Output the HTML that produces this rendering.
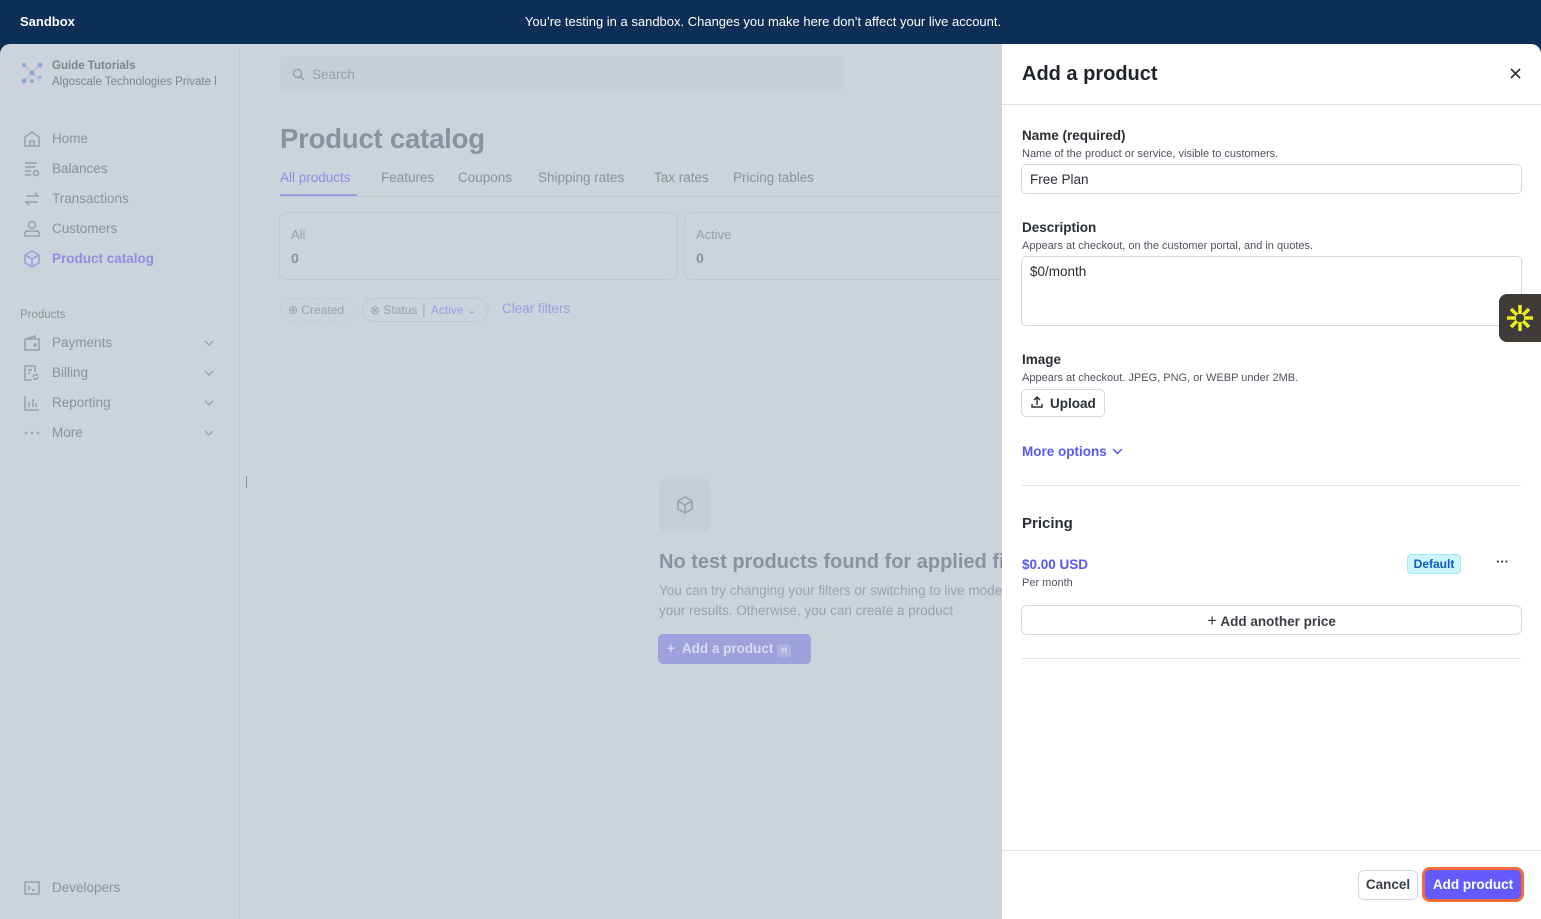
<!DOCTYPE html>
<html><head><style>
*{box-sizing:border-box;margin:0;padding:0}
body{width:1541px;height:919px;overflow:hidden;background:#0d2f57;font-family:"Liberation Sans",sans-serif;position:relative}
.top{position:absolute;left:0;top:0;width:1541px;height:44px;color:#fff;font-size:13px}
.top .l{position:absolute;left:20px;top:14px;font-weight:bold}
.top .c{position:absolute;left:0;width:1526px;top:14px;text-align:center}
.app{position:absolute;left:0;top:44px;width:1541px;height:875px;background:#ccd3dd;border-radius:10px 10px 0 0;overflow:hidden}
.side{position:absolute;left:0;top:0;width:240px;height:875px;border-right:1px solid #c4cbd5}
.nav{position:absolute;left:52px;font-size:13.5px;color:#8a929d}
.si{position:absolute;left:23px}
.chev{position:absolute;left:204px}
.tab{position:absolute;top:126px;font-size:13.5px;color:#8a929d}
.panel{position:absolute;left:1002px;top:0;width:539px;height:875px;background:#fff;border-radius:0 10px 0 0}
.lbl{position:absolute;left:20px;font-size:13.5px;font-weight:bold;color:#2a2f36}
.sub{position:absolute;left:20px;font-size:11px;color:#4d5560}
.inp{position:absolute;left:19px;width:501px;border:1px solid #d5d9de;border-radius:5px;font-size:13.5px;color:#2a2f36;padding:7px 8px}
.hr{position:absolute;left:20px;width:499px;height:1px;background:#e1e4e8}
</style></head><body>
<div class="top"><span class="l">Sandbox</span><div class="c">You’re testing in a sandbox. Changes you make here don’t affect your live account.</div></div>
<div class="app">
<div class="side">
<svg style="position:absolute;left:21px;top:18px" width="22" height="22"><path d="M3 3L19 19M19 3L3 19" stroke="#a9b8dc" stroke-width="1"/><circle cx="3" cy="3" r="2" fill="#8fa6d6"/><circle cx="19" cy="3" r="2.5" fill="#8fa6d6"/><circle cx="11" cy="11" r="2.5" fill="#8fa6d6"/><circle cx="3" cy="19" r="2.5" fill="#8fa6d6"/><circle cx="11" cy="19" r="2" fill="#8fa6d6"/><circle cx="19" cy="15" r="1.5" fill="#8fa6d6"/></svg>
<div style="position:absolute;left:52px;top:16px;font-size:11.5px;color:#7c848f;font-weight:bold">Guide Tutorials</div>
<div style="position:absolute;left:52px;top:32px;font-size:11.5px;color:#7c848f;white-space:nowrap;width:170px;overflow:hidden">Algoscale Technologies Private l</div>
<svg class="si" style="top:86px" width="18" height="18" fill="none" stroke="#97a0ab" stroke-width="1.5"><path d="M2 7L9 2L16 7V16H2Z M7 16V11H11V16"/></svg><div class="nav" style="top:87px">Home</div>
<svg class="si" style="top:116px" width="18" height="18" fill="none" stroke="#97a0ab" stroke-width="1.5"><path d="M2 3H14M2 7H12M2 11H8M2 15H8"/><circle cx="13" cy="13" r="2.5"/></svg><div class="nav" style="top:117px">Balances</div>
<svg class="si" style="top:146px" width="18" height="18" fill="none" stroke="#97a0ab" stroke-width="1.5"><path d="M3 6H15L12 3M15 12H3L6 15"/></svg><div class="nav" style="top:147px">Transactions</div>
<svg class="si" style="top:176px" width="18" height="18" fill="none" stroke="#97a0ab" stroke-width="1.5"><circle cx="9" cy="5" r="3.5"/><path d="M2 16V13Q2 11 5 11H13Q16 11 16 13V16Z"/></svg><div class="nav" style="top:177px">Customers</div>
<svg class="si" style="top:206px" width="18" height="18" fill="none" stroke="#9a9ee0" stroke-width="1.5"><path d="M9 1L16 5V13L9 17L2 13V5Z M2 5L9 9L16 5 M9 9V17"/></svg><div class="nav" style="top:207px;color:#8f8fe0;font-weight:bold">Product catalog</div>
<div style="position:absolute;left:20px;top:265px;font-size:11.5px;color:#8a929d">Products</div>
<svg class="si" style="top:290px" width="18" height="18" fill="none" stroke="#97a0ab" stroke-width="1.5"><path d="M2 5H16V16H2Z M3 5L12 2V5"/><circle cx="12" cy="11" r="1" fill="#97a0ab"/></svg><div class="nav" style="top:291px">Payments</div>
<svg class="si" style="top:320px" width="18" height="18" fill="none" stroke="#97a0ab" stroke-width="1.5"><path d="M9 16H2V2H12V8 M5 6H9M5 9H7 M10 13Q11 10 15 11M15 13Q14 16 10 15"/></svg><div class="nav" style="top:321px">Billing</div>
<svg class="si" style="top:350px" width="18" height="18" fill="none" stroke="#97a0ab" stroke-width="1.5"><path d="M2 2V16H16 M6 8V13M10 5V13M13 9V13"/></svg><div class="nav" style="top:351px">Reporting</div>
<svg class="si" style="top:380px" width="18" height="18" fill="#97a0ab"><circle cx="3" cy="9" r="1.3"/><circle cx="9" cy="9" r="1.3"/><circle cx="15" cy="9" r="1.3"/></svg><div class="nav" style="top:381px">More</div>
<svg class="chev" style="top:296px" width="10" height="6" fill="none" stroke="#97a0ab" stroke-width="1.3"><path d="M1 1L5 5L9 1"/></svg>
<svg class="chev" style="top:326px" width="10" height="6" fill="none" stroke="#97a0ab" stroke-width="1.3"><path d="M1 1L5 5L9 1"/></svg>
<svg class="chev" style="top:356px" width="10" height="6" fill="none" stroke="#97a0ab" stroke-width="1.3"><path d="M1 1L5 5L9 1"/></svg>
<svg class="chev" style="top:386px" width="10" height="6" fill="none" stroke="#97a0ab" stroke-width="1.3"><path d="M1 1L5 5L9 1"/></svg>
<svg class="si" style="top:835px" width="18" height="18" fill="none" stroke="#97a0ab" stroke-width="1.5"><path d="M2 3H16V15H2Z M5 7L7 9L5 11M9 11H12"/></svg><div class="nav" style="top:836px">Developers</div>
</div>
<div style="position:absolute;left:246px;top:432px;width:1px;height:12px;background:#8a929d"></div>
<div style="position:absolute;left:280px;top:12px;width:564px;height:36px;background:#c7ced8;border-radius:6px"></div>
<svg style="position:absolute;left:292px;top:24px" width="13" height="13" fill="none" stroke="#97a0ab" stroke-width="1.5"><circle cx="5.5" cy="5.5" r="4"/><path d="M8.5 8.5L12 12"/></svg>
<div style="position:absolute;left:312px;top:23px;font-size:13.5px;color:#97a0ab">Search</div>
<div style="position:absolute;left:280px;top:79px;font-size:27.5px;font-weight:bold;color:#8a929d;letter-spacing:-0.2px">Product catalog</div>
<div class="tab" style="left:280px;color:#8f8fe0">All products</div>
<div style="position:absolute;left:280px;top:150px;width:77px;height:2px;background:#9a9ee0"></div>
<div style="position:absolute;left:280px;top:152px;width:722px;height:1px;background:#c1c8d2"></div>
<div class="tab" style="left:381px">Features</div>
<div class="tab" style="left:458px">Coupons</div>
<div class="tab" style="left:538px">Shipping rates</div>
<div class="tab" style="left:654px">Tax rates</div>
<div class="tab" style="left:733px">Pricing tables</div>
<div style="position:absolute;left:279px;top:168px;width:399px;height:68px;border:1px solid #c1c8d2;border-radius:7px"></div>
<div style="position:absolute;left:684px;top:168px;width:330px;height:68px;border:1px solid #c1c8d2;border-radius:7px"></div>
<div style="position:absolute;left:291px;top:183px;font-size:13px;color:#97a0ab">All</div>
<div style="position:absolute;left:291px;top:206px;font-size:14px;font-weight:bold;color:#8a929d">0</div>
<div style="position:absolute;left:696px;top:183px;font-size:13px;color:#97a0ab">Active</div>
<div style="position:absolute;left:696px;top:206px;font-size:14px;font-weight:bold;color:#8a929d">0</div>
<div style="position:absolute;left:280px;top:254px;width:75px;height:24px;border:1px dashed #c1c8d2;border-radius:12px;font-size:12px;color:#97a0ab;padding:4px 0 0 7px">⊕ Created</div>
<div style="position:absolute;left:362px;top:254px;width:127px;height:24px;border:1px solid #c1c8d2;border-radius:12px;font-size:12px;color:#97a0ab;padding:4px 0 0 7px">⊗ Status │ <span style="color:#9a9ee0">Active ⌄</span></div>
<div style="position:absolute;left:502px;top:257px;font-size:13.5px;color:#9a9ee0">Clear filters</div>
<div style="position:absolute;left:659px;top:435px;width:52px;height:52px;background:#c6cdd7;border-radius:6px"></div>
<svg style="position:absolute;left:675px;top:451px" width="20" height="20" fill="none" stroke="#97a0ab" stroke-width="1.5"><path d="M10 2L17 6V14L10 18L3 14V6Z M3 6L10 10L17 6 M10 10V18"/></svg>
<div style="position:absolute;left:659px;top:507px;font-size:20px;font-weight:bold;color:#8a929d;white-space:nowrap;width:343px;overflow:hidden">No test products found for applied filters</div>
<div style="position:absolute;left:659px;top:537px;font-size:13.5px;color:#9aa2ad;line-height:20px;white-space:nowrap;width:343px;overflow:hidden">You can try changing your filters or switching to live mode<br>your results. Otherwise, you can create a product</div>
<div style="position:absolute;left:658px;top:590px;width:153px;height:30px;background:#9ea2dc;border-radius:5px;color:#d9dbf3;font-size:13.5px;font-weight:bold;padding:7px 0 0 9px">+&nbsp; Add a product <span style="font-size:10px;background:#aeb2e2;padding:1px 4px;border-radius:3px">n</span></div>
<div class="panel">
<div style="position:absolute;left:20px;top:19px;font-size:20px;font-weight:bold;color:#1f242b">Add a product</div>
<svg style="position:absolute;left:508px;top:24px" width="11" height="11" stroke="#333" stroke-width="1.7"><path d="M1 1L10 10M10 1L1 10"/></svg>
<div class="hr" style="left:0;width:539px;top:60px"></div>
<div class="lbl" style="top:84px">Name (required)</div>
<div class="sub" style="top:104px">Name of the product or service, visible to customers.</div>
<div class="inp" style="top:120px;height:30px">Free Plan</div>
<div class="lbl" style="top:176px">Description</div>
<div class="sub" style="top:196px">Appears at checkout, on the customer portal, and in quotes.</div>
<div class="inp" style="top:212px;height:70px">$0/month</div>
<div class="lbl" style="top:308px">Image</div>
<div class="sub" style="top:328px">Appears at checkout. JPEG, PNG, or WEBP under 2MB.</div>
<div style="position:absolute;left:19px;top:345px;width:84px;height:28px;border:1px solid #d5d9de;border-radius:5px;font-size:13.5px;font-weight:bold;color:#2a2f36;padding:6px 0 0 28px">Upload</div>
<svg style="position:absolute;left:29px;top:352px" width="12" height="12" fill="none" stroke="#2a2f36" stroke-width="1.4"><path d="M6 9V1M3 4L6 1L9 4M1 8V11H11V8"/></svg>
<div style="position:absolute;left:20px;top:400px;font-size:13.5px;color:#5b57f0;font-weight:bold">More options</div>
<svg style="position:absolute;left:110px;top:404px" width="11" height="7" fill="none" stroke="#5b57f0" stroke-width="1.5"><path d="M1 1L5.5 5.5L10 1"/></svg>
<div class="hr" style="top:441px"></div>
<div class="lbl" style="top:471px;font-size:15px">Pricing</div>
<div style="position:absolute;left:20px;top:513px;font-size:13.5px;color:#5b57f0;font-weight:bold">$0.00 USD</div>
<div class="sub" style="top:533px">Per month</div>
<div style="position:absolute;left:405px;top:510px;width:54px;height:20px;background:#cdf5fd;border:1px solid #a8e8f6;border-radius:4px;font-size:12px;font-weight:bold;color:#0a58c2;text-align:center;line-height:18px">Default</div>
<div style="position:absolute;left:494px;top:510px;font-size:13px;color:#333;font-weight:bold">···</div>
<div style="position:absolute;left:19px;top:561px;width:501px;height:30px;border:1px solid #d5d9de;border-radius:6px;text-align:center;font-size:13.5px;font-weight:bold;color:#3a3f46;line-height:29px"><span style="font-weight:normal;font-size:17px">+</span> Add another price</div>
<div class="hr" style="top:614px"></div>
<div class="hr" style="left:0;width:539px;top:806px"></div>
<div style="position:absolute;left:356px;top:826px;width:60px;height:30px;border:1px solid #d5d9de;border-radius:6px;font-size:13.5px;font-weight:bold;color:#3a3f46;text-align:center;line-height:28px">Cancel</div>
<div style="position:absolute;left:420px;top:823px;width:102px;height:35px;border:3px solid #f56a3c;border-radius:8px;background:#635bff;font-size:13.5px;font-weight:bold;color:#fff;text-align:center;line-height:29px">Add product</div>
</div>
<div style="position:absolute;left:1499px;top:250px;width:42px;height:48px;background:#403b38;border-radius:8px 0 0 8px"></div>
<svg style="position:absolute;left:1506px;top:260px" width="28" height="28" stroke="#e9f01b" stroke-width="3.5" stroke-linecap="butt"><path d="M14 1V10M14 18V27M1 14H10M18 14H27M5 5L11 11M17 17L23 23M23 5L17 11M11 17L5 23"/></svg>
</div>
</body></html>
